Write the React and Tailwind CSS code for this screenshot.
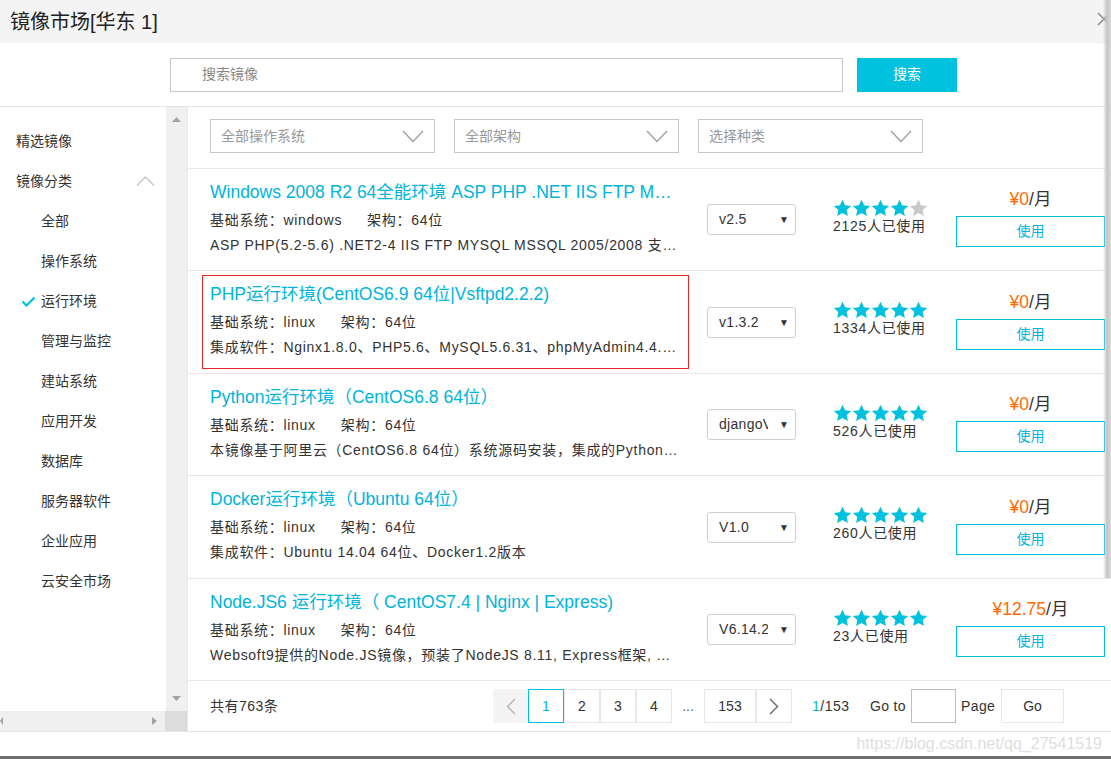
import React from "react";

const CYAN = "#00c1de";

const images = [
  {
    title: "Windows 2008 R2 64全能环境 ASP PHP .NET IIS FTP MYSQL MSSQL 2005/2008",
    sys: "windows",
    desc: "ASP PHP(5.2-5.6) .NET2-4 IIS FTP MYSQL MSSQL 2005/2008 支持伪静态",
    version: "v2.5",
    stars: 4,
    users: 2125,
    price: "0",
    h: "h-[102px]",
  },
  {
    title: "PHP运行环境(CentOS6.9 64位|Vsftpd2.2.2)",
    sys: "linux",
    desc: "集成软件：Nginx1.8.0、PHP5.6、MySQL5.6.31、phpMyAdmin4.4.15",
    version: "v1.3.2",
    stars: 5,
    users: 1334,
    price: "0",
    active: true,
    h: "h-[103px]",
  },
  {
    title: "Python运行环境（CentOS6.8 64位）",
    sys: "linux",
    desc: "本镜像基于阿里云（CentOS6.8 64位）系统源码安装，集成的Python运行环境",
    version: "djangoV1.10",
    stars: 5,
    users: 526,
    price: "0",
    h: "h-[102px]",
  },
  {
    title: "Docker运行环境（Ubuntu 64位）",
    sys: "linux",
    desc: "集成软件：Ubuntu 14.04 64位、Docker1.2版本",
    version: "V1.0",
    stars: 5,
    users: 260,
    price: "0",
    h: "h-[103px]",
  },
  {
    title: "Node.JS6 运行环境（ CentOS7.4 | Nginx | Express)",
    sys: "linux",
    desc: "Websoft9提供的Node.JS镜像，预装了NodeJS 8.11, Express框架, PM2等工具",
    version: "V6.14.2",
    stars: 5,
    users: 23,
    price: "12.75",
    h: "h-[102px]",
  },
];

const menu = ["全部", "操作系统", "运行环境", "管理与监控", "建站系统", "应用开发", "数据库", "服务器软件", "企业应用", "云安全市场"];

const Star = ({ on }) => (
  <svg width="19" height="18" viewBox="0 0 24 23">
    <path
      d="M12 0.8l3.3 7.1 7.8 0.9-5.8 5.3 1.6 7.7L12 17.9l-6.9 3.9 1.6-7.7L0.9 8.8l7.8-0.9z"
      fill={on ? CYAN : "#c9c9c9"}
    />
  </svg>
);

const Chevron = () => (
  <svg width="22" height="13" viewBox="0 0 22 13" fill="none">
    <path d="M1 1l10 10.5L21 1" stroke="#a0a0a0" strokeWidth="1.4" />
  </svg>
);

const Filter = ({ label }) => (
  <div className="w-[225px] h-[34px] border border-[#c8c8c8] flex items-center justify-between pl-[10px] pr-[10px] text-[14px] text-[#999]">
    <span>{label}</span>
    <Chevron />
  </div>
);

const Row = ({ item }) => (
  <div className={`${item.h} border-b border-[#e8e8e8] flex items-center`}>
    <div
      className={`ml-[14px] w-[487px] h-[94px] border ${
        item.active ? "border-[#e8262c]" : "border-transparent"
      } pl-[7px] pr-[10px] pt-[6px]`}
    >
      <div className="text-[17.5px] leading-[24px] text-[#00b4da] truncate">{item.title}</div>
      <div className="mt-[4px] text-[14px] leading-[25px] tracking-[0.7px] text-[#333] flex">
        <span>基础系统：{item.sys}</span>
        <span className="ml-[25px]">架构：64位</span>
      </div>
      <div className="text-[14px] leading-[25px] tracking-[0.7px] text-[#333] truncate">{item.desc}</div>
    </div>
    <div className="ml-[18px] w-[89px] h-[31px] border border-[#cfcfcf] rounded-[3px] flex items-center pl-[11px] text-[14px] tracking-[0.3px] text-[#333]">
      <span className="w-[49px] overflow-hidden whitespace-nowrap">{item.version}</span>
      <span className="ml-[11px] text-[10px] text-[#333]">▼</span>
    </div>
    <div className="ml-[37px] w-[95px] mb-[6px]">
      <div className="flex h-[18px]">
        {[0, 1, 2, 3, 4].map((i) => (
          <Star key={i} on={i < item.stars} />
        ))}
      </div>
      <div className="text-[14px] leading-[18px] tracking-[0.7px] text-[#333] whitespace-nowrap">{item.users}人已使用</div>
    </div>
    <div className="ml-[28px] w-[149px] mb-[4px] flex flex-col items-center">
      <div className="text-[17.5px] leading-[22px]">
        <span className="text-[#ff6a00]">¥{item.price}</span>
        <span className="text-[#333]">/月</span>
      </div>
      <button className="mt-[6px] w-[149px] h-[31px] border border-[#00c1de] text-[14px] text-[#00b4da] bg-white">
        使用
      </button>
    </div>
  </div>
);

const PageBox = ({ children, w = "w-[36px]", active }) => (
  <div
    className={`${w} h-[34px] border ${
      active ? "border-[#00c1de] text-[#00b4da]" : "border-[#e8e8e8] text-[#333]"
    } flex items-center justify-center text-[14px]`}
  >
    {children}
  </div>
);

export default function App() {
  return (
    <div className="w-[1111px] h-[759px] relative overflow-hidden bg-white font-['Liberation_Sans','Noto_Sans_CJK_SC',sans-serif]">
      {/* header */}
      <div className="h-[43px] bg-[#f4f4f4] flex items-center pl-[10px] text-[20px] text-[#222]">
        镜像市场[华东 1]
      </div>
      <svg className="absolute left-[1097px] top-[12px]" width="14" height="14" viewBox="0 0 14 14">
        <path d="M1 1l12 12M13 1L1 13" stroke="#8f8f8f" strokeWidth="1.6" />
      </svg>

      {/* search */}
      <div className="h-[63px] flex items-center pl-[170px] border-b border-[#e5e5e5] box-content">
        <div className="w-[673px] h-[34px] border border-[#c8c8c8] flex items-center pl-[31px] text-[14px] text-[#888]">
          搜索镜像
        </div>
        <button className="ml-[14px] w-[100px] h-[34px] bg-[#00c1de] text-white text-[14px]">搜索</button>
      </div>

      {/* body */}
      <div className="h-[624px] flex">
        {/* sidebar */}
        <div className="w-[188px] flex flex-col border-r border-[#e8e8e8]">
          <div className="flex h-[604px]">
            <div className="w-[166px] pt-[14px] text-[14px] text-[#333]">
              <div className="h-[40px] flex items-center pl-[16px]">精选镜像</div>
              <div className="h-[40px] flex items-center pl-[16px] justify-between pr-[11px]">
                <span>镜像分类</span>
                <svg width="19" height="10" viewBox="0 0 19 10" fill="none">
                  <path d="M1 9.5L9.5 1 18 9.5" stroke="#c4c4c4" strokeWidth="1.3" />
                </svg>
              </div>
              {menu.map((m) => (
                <div key={m} className="h-[40px] flex items-center pl-[41px] relative">
                  {m === "运行环境" && (
                    <svg className="absolute left-[21px] top-[15px]" width="15" height="11" viewBox="0 0 15 11" fill="none">
                      <path d="M1.5 5.5l4 4L13.5 1.5" stroke={CYAN} strokeWidth="2.2" />
                    </svg>
                  )}
                  {m}
                </div>
              ))}
            </div>
            <div className="w-[21px] bg-[#f0f0f0] flex flex-col items-center justify-between pt-[10px] pb-[10px]">
              <svg width="9" height="5" viewBox="0 0 9 5">
                <path d="M0 5L4.5 0 9 5z" fill="#a3a3a3" />
              </svg>
              <svg width="9" height="5" viewBox="0 0 9 5">
                <path d="M0 0L4.5 5 9 0z" fill="#a3a3a3" />
              </svg>
            </div>
          </div>
          <div className="flex h-[20px]">
            <div className="w-[165px] bg-[#f0f0f0] flex items-center justify-between pr-[8px]">
              <svg width="3" height="8" viewBox="0 0 3 8">
                <path d="M3 0L0 4 3 8z" fill="#a3a3a3" />
              </svg>
              <svg width="5" height="8" viewBox="0 0 5 8">
                <path d="M0 0L5 4 0 8z" fill="#a3a3a3" />
              </svg>
            </div>
            <div className="flex-1 bg-[#dcdcdc]" />
          </div>
        </div>

        {/* main */}
        <div className="flex-1 flex flex-col">
          <div className="h-[62px] border-b border-[#e8e8e8] flex gap-[19px] pl-[22px] pt-[12px]">
            <Filter label="全部操作系统" />
            <Filter label="全部架构" />
            <Filter label="选择种类" />
          </div>
          {images.map((item) => (
            <Row key={item.title} item={item} />
          ))}
          <div className="flex-1 flex items-center pl-[22px] text-[14px] text-[#333] whitespace-nowrap">
            <span className="w-[283px] tracking-[0.5px]">共有763条</span>
            <div className="w-[35px] h-[34px] bg-[#f4f4f4] flex items-center justify-center">
              <svg width="10" height="17" viewBox="0 0 10 17" fill="none">
                <path d="M9 1L1.5 8.5 9 16" stroke="#b5b5b5" strokeWidth="1.4" />
              </svg>
            </div>
            <PageBox active>1</PageBox>
            <PageBox>2</PageBox>
            <PageBox>3</PageBox>
            <PageBox>4</PageBox>
            <span className="w-[32px] text-center text-[#666]">...</span>
            <PageBox w="w-[52px]">153</PageBox>
            <PageBox>
              <svg width="10" height="17" viewBox="0 0 10 17" fill="none">
                <path d="M1 1l7.5 7.5L1 16" stroke="#666" strokeWidth="1.4" />
              </svg>
            </PageBox>
            <span className="ml-[20px] w-[38px] tracking-[0.5px]">
              <span className="text-[#00b4da]">1</span>/153
            </span>
            <span className="ml-[20px] w-[36px] tracking-[0.3px]">Go to</span>
            <div className="ml-[5px] w-[45px] h-[34px] border border-[#bdbdbd]" />
            <span className="ml-[5px] w-[36px] tracking-[0.4px]">Page</span>
            <div className="ml-[4px] w-[63px] h-[34px] border border-[#e8e8e8] flex items-center justify-center">Go</div>
          </div>
        </div>
      </div>

      {/* bottom */}
      <div className="h-[25px] border-t border-[#e5e5e5] flex items-center justify-end pr-[9px] text-[16px] text-[#dedede]">
        https://blog.csdn.net/qq_27541519
      </div>
      <div className="h-[3px] bg-[#707070]" />

      <div className="absolute right-0 top-0 w-[8px] h-[578px] bg-gradient-to-r from-[#ffffff00] via-[#c4c4c4] to-[#dadada]" />
    </div>
  );
}
